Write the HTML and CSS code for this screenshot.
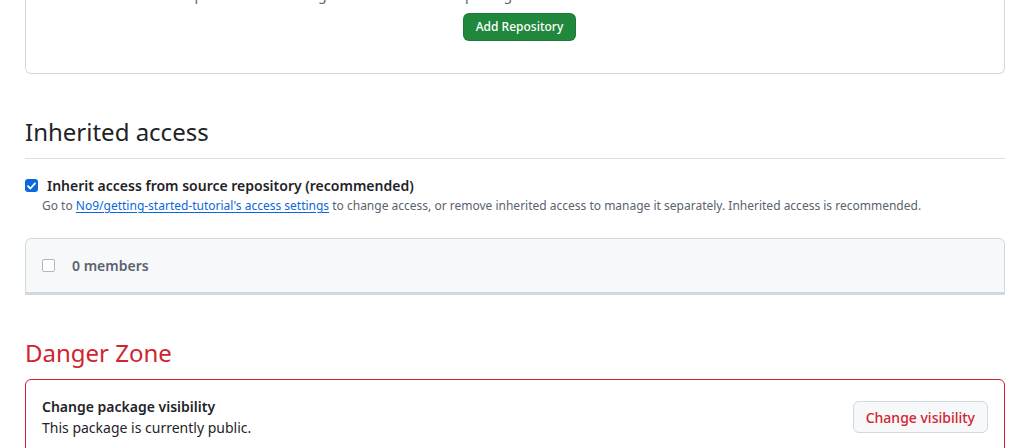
FILE: index.html
```html
<!DOCTYPE html>
<html>
<head>
<meta charset="utf-8">
<link rel="stylesheet" href="styles.css">
</head>
<body>
<div class="page">
  <div class="box blank">
    <p class="blank-text">Repositories that are granted access to this package will be able to use it via GitHub Actions workflows.</p>
    <button class="btn-primary">Add Repository</button>
  </div>

  <h2 class="subhead">Inherited access</h2>
  <div class="check-row">
    <span class="cb checked">
      <svg width="9" height="8" viewBox="0 0 9 8"><path d="M1 4.2 L3.4 6.5 L8 1.4" fill="none" stroke="#fff" stroke-width="1.8" stroke-linecap="round" stroke-linejoin="round"/></svg>
    </span>
    <div class="check-body">
      <div class="check-label">Inherit access from source repository (recommended)</div>
      <div class="note">Go to <a href="#" class="link">No9/getting-started-tutorial's access settings</a> to change access, or remove inherited access to manage it separately. Inherited access is recommended.</div>
    </div>
  </div>

  <div class="box members">
    <div class="members-header">
      <span class="cb empty"></span>
      <span class="members-label">0 members</span>
    </div>
  </div>

  <h2 class="subhead danger">Danger Zone</h2>
  <div class="box danger-box">
    <div class="danger-row">
      <div>
        <div class="row-title">Change package visibility</div>
        <div class="row-desc">This package is currently public.</div>
      </div>
      <button class="btn-danger">Change visibility</button>
    </div>
  </div>
</div>
</body>
</html>
```

FILE: styles.css
```css
html, body {
  margin: 0;
  padding: 0;
  background: #ffffff;
  overflow: hidden;
}
body {
  font-family: "Noto Sans", "Liberation Sans", sans-serif;
  font-size: 14px;
  line-height: 1.5;
  color: #1f2328;
}
.page {
  width: 980px;
  margin-left: 25px;
}
.box {
  border: 1px solid #d1d9e0;
  border-radius: 6px;
}
.blank {
  border-top: none;
  border-top-left-radius: 0;
  border-top-right-radius: 0;
  text-align: center;
  padding-bottom: 32px;
}
.blank-text {
  margin: -16px 0 8px;
  color: #59636e;
  font-size: 14px;
  line-height: 21px;
}
.btn-primary {
  font-family: inherit;
  font-size: 12px;
  font-weight: 500;
  color: #ffffff;
  background: #1f883d;
  border: 1px solid rgba(31, 35, 40, 0.15);
  border-radius: 6px;
  height: 28px;
  padding: 0 12px;
  line-height: 26px;
  margin-left: 9px;
  vertical-align: top;
}
.subhead {
  margin: 40px 0 0;
  font-size: 24px;
  font-weight: 400;
  line-height: 36px;
  padding-bottom: 8px;
  border-bottom: 1px solid #d8dee4;
}
.check-row {
  display: flex;
  margin-top: 16px;
}
.cb {
  width: 13px;
  height: 13px;
  box-sizing: border-box;
  border-radius: 3px;
  flex: none;
  display: flex;
  align-items: center;
  justify-content: center;
}
.cb.checked {
  background: #0969da;
  margin-top: 4px;
  margin-right: 9px;
}
.cb.empty {
  border: 1px solid #afb8c1;
  background: #ffffff;
  border-radius: 2px;
}
.check-label {
  font-weight: 600;
  line-height: 21px;
}
.note {
  font-size: 12px;
  color: #59636e;
  line-height: 18px;
  margin-left: -5px;
  margin-top: 1px;
}
.link {
  color: #0969da;
  text-decoration: underline;
  text-underline-offset: 2px;
}
.members {
  margin-top: 23px;
  border-bottom-left-radius: 0;
  border-bottom-right-radius: 0;
  border-bottom: 1px solid #d1d9e0;
  background: #f6f8fa;
}
.members-header {
  display: flex;
  align-items: center;
  padding: 16px;
  border-bottom: 2px solid #d1d9e0;
}
.members-label {
  margin-left: 17px;
  font-weight: 600;
  color: #59636e;
}
.subhead.danger {
  color: #d1242f;
  border-bottom: none;
  padding-bottom: 8px;
}
.danger-box {
  border-color: #cf222e;
}
.danger-row {
  display: flex;
  align-items: center;
  justify-content: space-between;
  padding: 16px;
}
.row-title {
  font-weight: 600;
}
.btn-danger {
  font-family: inherit;
  font-size: 14px;
  font-weight: 500;
  color: #d1242f;
  background: #f6f8fa;
  border: 1px solid #d1d9e0;
  border-radius: 6px;
  height: 32px;
  padding: 0 12px;
}
```
